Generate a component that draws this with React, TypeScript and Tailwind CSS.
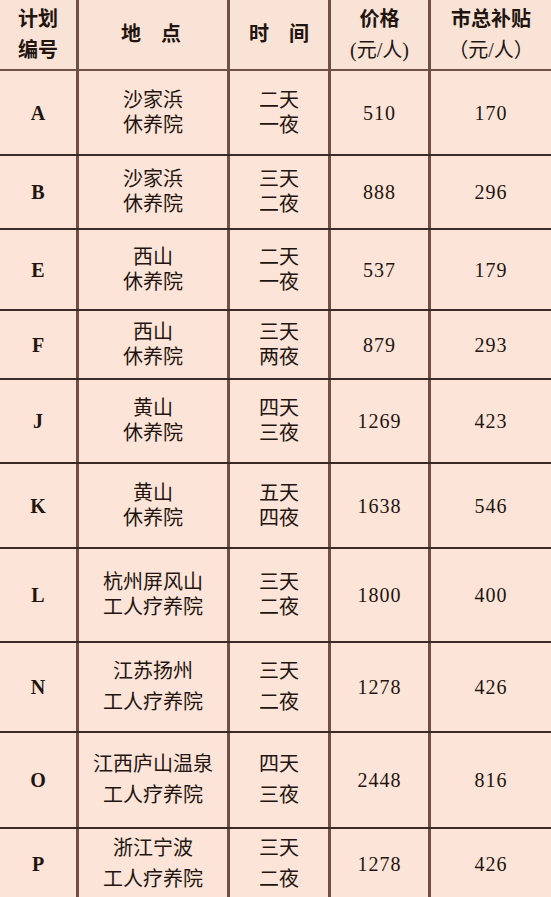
import React from "react";

type Row = {
  id: string;
  place: [string, string];
  time: [string, string];
  price: string;
  sub: string;
  h: string;
  lh: string;
};

const rows: Row[] = [
  { id: "A", place: ["沙家浜", "休养院"], time: ["二天", "一夜"], price: "510", sub: "170", h: "h-[85px]", lh: "leading-[25px]" },
  { id: "B", place: ["沙家浜", "休养院"], time: ["三天", "二夜"], price: "888", sub: "296", h: "h-[74px]", lh: "leading-[25px]" },
  { id: "E", place: ["西山", "休养院"], time: ["二天", "一夜"], price: "537", sub: "179", h: "h-[81px]", lh: "leading-[25px]" },
  { id: "F", place: ["西山", "休养院"], time: ["三天", "两夜"], price: "879", sub: "293", h: "h-[69px]", lh: "leading-[25px]" },
  { id: "J", place: ["黄山", "休养院"], time: ["四天", "三夜"], price: "1269", sub: "423", h: "h-[84px]", lh: "leading-[25px]" },
  { id: "K", place: ["黄山", "休养院"], time: ["五天", "四夜"], price: "1638", sub: "546", h: "h-[85px]", lh: "leading-[25px]" },
  { id: "L", place: ["杭州屏风山", "工人疗养院"], time: ["三天", "二夜"], price: "1800", sub: "400", h: "h-[94px]", lh: "leading-[25px]" },
  { id: "N", place: ["江苏扬州", "工人疗养院"], time: ["三天", "二夜"], price: "1278", sub: "426", h: "h-[90px]", lh: "leading-[31px]" },
  { id: "O", place: ["江西庐山温泉", "工人疗养院"], time: ["四天", "三夜"], price: "2448", sub: "816", h: "h-[96px]", lh: "leading-[31px]" },
  { id: "P", place: ["浙江宁波", "工人疗养院"], time: ["三天", "二夜"], price: "1278", sub: "426", h: "h-[69px]", lh: "leading-[31px]" },
];

const font = { fontFamily: '"Liberation Serif", "Noto Sans CJK SC", serif' };

function Cell({ w, children, last, cls = "" }: { w: string; children: React.ReactNode; last?: boolean; cls?: string }) {
  return (
    <div
      className={`${w} shrink-0 h-full flex flex-col items-center justify-center text-center ${
        last ? "" : "border-r-[3px] border-[#6e5047]"
      } ${cls}`}
    >
      {children}
    </div>
  );
}

export default function App() {
  return (
    <div className="w-[551px] h-[897px] overflow-hidden bg-[#fce4d8] text-[#22140f]" style={font}>
      {/* header */}
      <div className="flex h-[71px] border-b-2 border-[#6e5047] bg-[#f9e2d6] font-bold text-[20px] leading-[31px]">
        <Cell w="w-[79px]">
          <div>计划</div>
          <div>编号</div>
        </Cell>
        <Cell w="w-[151px]">
          <div className="ml-[-4px]">地　点</div>
        </Cell>
        <Cell w="w-[101px]">
          <div>时　间</div>
        </Cell>
        <Cell w="w-[100px]">
          <div>价格</div>
          <div className="font-normal">(元/人)</div>
        </Cell>
        <Cell w="w-[120px]" last>
          <div>市总补贴</div>
          <div className="font-normal">（元/人）</div>
        </Cell>
      </div>
      {rows.map((r, i) => (
        <div
          key={r.id}
          className={`flex ${r.h} ${i === rows.length - 1 ? "" : "border-b-2 border-[#3b2a25]"} text-[20px]`}
        >
          <Cell w="w-[79px]" cls="font-semibold">
            <div>{r.id}</div>
          </Cell>
          <Cell w="w-[151px]" cls={r.lh}>
            <div>{r.place[0]}</div>
            <div>{r.place[1]}</div>
          </Cell>
          <Cell w="w-[101px]" cls={r.lh}>
            <div>{r.time[0]}</div>
            <div>{r.time[1]}</div>
          </Cell>
          <Cell w="w-[100px]">
            <div className="tracking-[1px]">{r.price}</div>
          </Cell>
          <Cell w="w-[120px]" last>
            <div className="tracking-[1px]">{r.sub}</div>
          </Cell>
        </div>
      ))}
    </div>
  );
}
